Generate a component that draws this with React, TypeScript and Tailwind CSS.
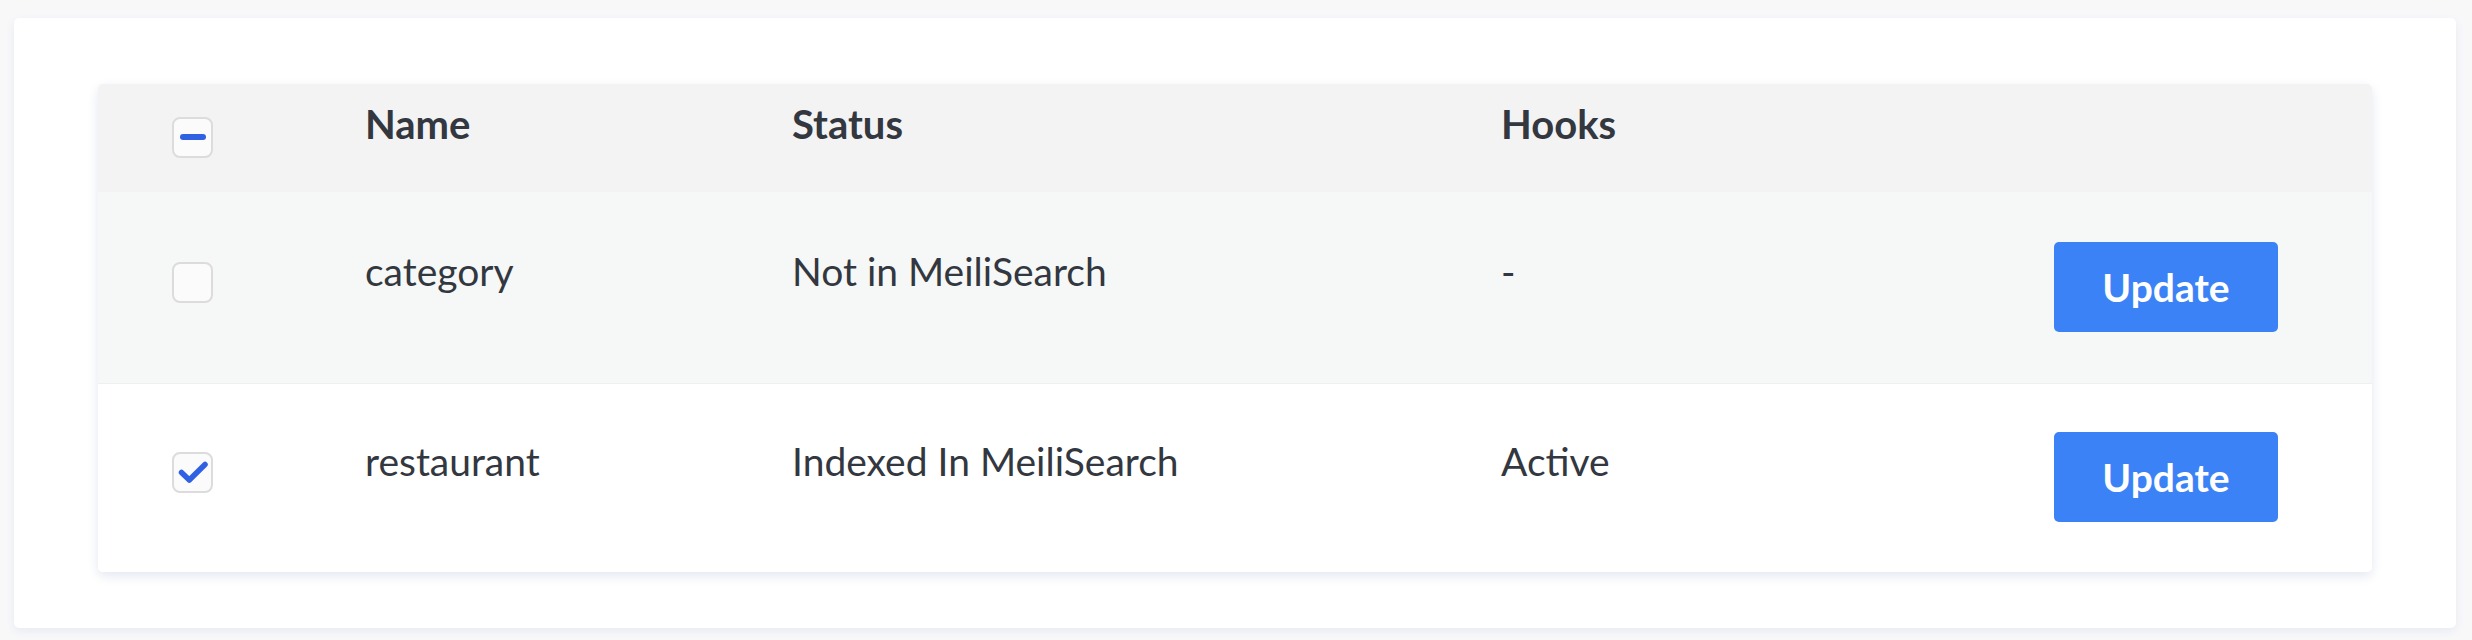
import React from "react";

type Row = {
  name: string;
  status: string;
  hooks: string;
  checked: boolean;
};

const rows: Row[] = [
  { name: "category", status: "Not in MeiliSearch", hooks: "-", checked: false },
  { name: "restaurant", status: "Indexed In MeiliSearch", hooks: "Active", checked: true },
];

const Checkbox = ({ state }: { state: "none" | "checked" | "some" }) => (
  <div className="relative w-[41px] h-[41px] rounded-[8px] border-2 border-[#dcdcdc] bg-[#fbfbfb]">
    {state === "some" && (
      <span className="absolute left-[6px] top-[15px] w-[26px] h-[6px] rounded-full bg-[#3061e3]" />
    )}
    {state === "checked" && (
      <svg className="absolute -left-[2px] -top-[2px]" width="41" height="41" viewBox="0 0 41 41">
        <path
          d="M9.5 20.5 L17.3 28 L33 12.5"
          fill="none"
          stroke="#3061e3"
          strokeWidth="5.5"
          strokeLinecap="round"
          strokeLinejoin="round"
        />
      </svg>
    )}
  </div>
);

const cols = "grid grid-cols-[267px_427px_709px_1fr_224px] pr-[94px]";

export default function App() {
  return (
    <div
      className="min-h-[640px] bg-[#f8f8f9] pl-[14px] pr-[16px] pt-[18px] text-[#333740]"
      style={{ fontFamily: "Lato, 'Open Sans', sans-serif" }}
    >
      <div className="bg-white rounded-[5px] shadow-[0_3px_8px_#e6eaf2] px-[84px] pt-[66px] pb-[56px]">
        <div className="bg-white rounded-[5px] shadow-[0_4px_12px_#e3e7f0] overflow-hidden">
          {/* header */}
          <div className={`${cols} h-[108px] bg-[#f3f3f4] items-start`}>
            <div className="pl-[74px] pt-[33px]">
              <Checkbox state="some" />
            </div>
            <div className="pt-[16px] text-[40px] leading-[48px] font-bold">Name</div>
            <div className="pt-[16px] text-[40px] leading-[48px] font-bold">Status</div>
            <div className="pt-[16px] text-[40px] leading-[48px] font-bold">Hooks</div>
            <div />
          </div>
          {rows.map((row, i) => (
            <div
              key={row.name}
              className={`${cols} items-start ${
                i === 0
                  ? "h-[192px] bg-[#f6f7f7] border-b border-[#eeeff0] pt-[2px]"
                  : "h-[188px] bg-white"
              }`}
            >
              <div className="pl-[74px] pt-[68px]">
                <Checkbox state={row.checked ? "checked" : "none"} />
              </div>
              <div className="pt-[54px] text-[39px] leading-[47px]">{row.name}</div>
              <div className="pt-[54px] text-[39px] leading-[47px]">{row.status}</div>
              <div className="pt-[54px] text-[39px] leading-[47px]">{row.hooks}</div>
              <div className="pt-[48px]">
                <button className="w-[224px] h-[90px] rounded-[5px] bg-[#3b82f6] text-white text-[39px] font-bold">
                  Update
                </button>
              </div>
            </div>
          ))}
        </div>
      </div>
    </div>
  );
}
